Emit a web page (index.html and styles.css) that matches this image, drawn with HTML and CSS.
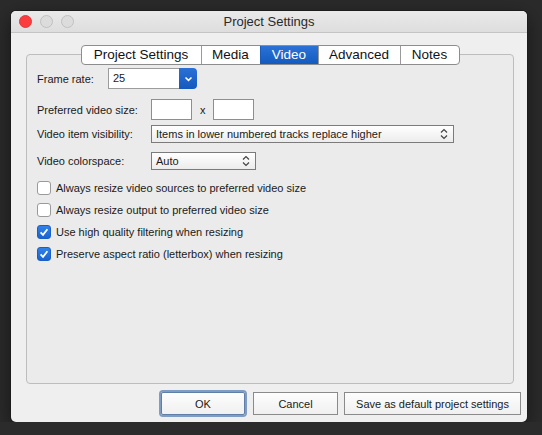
FILE: index.html
```html
<!DOCTYPE html>
<html>
<head>
    <meta charset="utf-8">
    <title>Project Settings</title>
    <link rel="stylesheet" href="styles.css">
</head>
<body>
    <div class="window">
        <div class="titlebar">
            <div class="lights">
                <span class="light close"></span>
                <span class="light"></span>
                <span class="light"></span>
            </div>
            <div class="title">Project Settings</div>
            <div></div>
        </div>

        <div class="content">
            <div class="tabs">
                <span class="tab t-project">Project Settings</span>
                <span class="tab t-media">Media</span>
                <span class="tab t-video active">Video</span>
                <span class="tab t-advanced">Advanced</span>
                <span class="tab t-notes">Notes</span>
            </div>

            <div class="panel">
                <div class="row frame-row">
                    <span class="label short">Frame rate:</span>
                    <div class="combo">
                        <span class="combo-text">25</span>
                        <span class="combo-arrow">
                            <svg width="9" height="6" viewBox="0 0 9 6"><path d="M1.5 1.5l3 2.8 3-2.8" fill="none" stroke="#fff" stroke-width="1.6"/></svg>
                        </span>
                    </div>
                </div>

                <div class="row size-row">
                    <span class="label">Preferred video size:</span>
                    <span class="field"></span>
                    <span class="times">x</span>
                    <span class="field"></span>
                </div>

                <div class="row visibility-row">
                    <span class="label">Video item visibility:</span>
                    <div class="popup wide">
                        <span>Items in lower numbered tracks replace higher</span>
                        <svg class="stepper" width="8" height="12" viewBox="0 0 8 12"><path d="M1 4.5l3-3 3 3M1 7.5l3 3 3-3" fill="none" stroke="#444" stroke-width="1.2"/></svg>
                    </div>
                </div>

                <div class="row colorspace-row">
                    <span class="label">Video colorspace:</span>
                    <div class="popup narrow">
                        <span>Auto</span>
                        <svg class="stepper" width="8" height="12" viewBox="0 0 8 12"><path d="M1 4.5l3-3 3 3M1 7.5l3 3 3-3" fill="none" stroke="#444" stroke-width="1.2"/></svg>
                    </div>
                </div>

                <div class="checks">
                    <label class="check"><span class="box"></span>Always resize video sources to preferred video size</label>
                    <label class="check"><span class="box"></span>Always resize output to preferred video size</label>
                    <label class="check"><span class="box on"><svg width="14" height="14" viewBox="0 0 14 14"><path d="M3.6 7.4l2.4 2.5 4.4-5.6" fill="none" stroke="#fff" stroke-width="1.8"/></svg></span>Use high quality filtering when resizing</label>
                    <label class="check"><span class="box on"><svg width="14" height="14" viewBox="0 0 14 14"><path d="M3.6 7.4l2.4 2.5 4.4-5.6" fill="none" stroke="#fff" stroke-width="1.8"/></svg></span>Preserve aspect ratio (letterbox) when resizing</label>
                </div>
            </div>

            <div class="buttons">
                <button class="btn ok">OK</button>
                <button class="btn cancel">Cancel</button>
                <button class="btn save">Save as default project settings</button>
            </div>
        </div>
    </div>
</body>
</html>
```

FILE: styles.css
```css
body {
    margin: 0;
    background: #2b2b2b;
    font-family: "Liberation Sans", Arial, sans-serif;
    font-size: 11px;
    color: #1a1a1a;
}

.window {
    margin: 11px 0 0 11px;
    width: 516px;
    height: 411px;
    background: #efefef;
    border-radius: 5px;
    display: flex;
    flex-direction: column;
    overflow: hidden;
    box-shadow: 0 0 0 1px #1c1c1c, 0 6px 20px rgba(0, 0, 0, 0.5);
}

/* title bar */
.titlebar {
    height: 21px;
    border-bottom: 1px solid #c4c4c4;
    background: linear-gradient(#e9e9e9, #dedede);
    display: grid;
    grid-template-columns: 1fr auto 1fr;
    align-items: center;
}
.lights {
    display: flex;
    gap: 8px;
    padding-left: 8px;
}
.light {
    width: 11px;
    height: 11px;
    border-radius: 50%;
    border: 1px solid #c0c0c0;
    background: #dcdcdc;
}
.light.close {
    background: #fc3d3f;
    border-color: #e2383a;
}
.title {
    font-size: 13px;
    color: #2a2a2a;
}

.content {
    flex: 1;
    display: flex;
    flex-direction: column;
    padding: 12px 13px 7px 15px;
}

/* tabs sit over the top edge of the panel */
.tabs {
    position: relative;
    z-index: 1;
    align-self: center;
    display: flex;
    margin-bottom: -11px;
    height: 20px;
    border: 1px solid #8d8d8d;
    border-radius: 4px;
    background: #fff;
    overflow: hidden;
    box-sizing: border-box;
}
.tab {
    font-size: 13.5px;
    line-height: 18px;
    text-align: center;
    border-left: 1px solid #9a9a9a;
    color: #111;
}
.tab:first-child {
    border-left: none;
}
.t-project { width: 119px; }
.t-media { width: 58px; }
.t-video { width: 57px; }
.t-advanced { width: 81px; }
.t-notes { width: 58px; }
.tab.active {
    background: linear-gradient(#2b72d6, #145bc0);
    color: #fff;
    border-left-color: #1b5cb8;
}

.panel {
    flex: 1;
    border: 1px solid #bdbdbd;
    border-radius: 4px;
    background: #ebebeb;
    padding: 13px 10px 0 10px;
}

.row {
    display: flex;
    align-items: center;
}
.label {
    width: 114px;
    flex: none;
}
.label.short {
    width: 71px;
}

/* frame rate combo box */
.combo {
    display: flex;
    height: 21px;
    width: 89px;
}
.combo-text {
    flex: 1;
    background: #fff;
    border: 1px solid #9c9c9c;
    border-right: none;
    padding-left: 4px;
    line-height: 19px;
}
.combo-arrow {
    width: 18px;
    background: linear-gradient(#2a70d5, #1559bf);
    border-radius: 0 4px 4px 0;
    display: flex;
    align-items: center;
    justify-content: center;
}

.size-row {
    margin-top: 10px;
}
.field {
    width: 39px;
    height: 19px;
    background: #fff;
    border: 1px solid #8e8e8e;
}
.times {
    margin: 0 7px 0 8px;
}

.visibility-row {
    margin-top: 5px;
}
.colorspace-row {
    margin-top: 9px;
}
.popup {
    height: 16px;
    border: 1px solid #7b7b7b;
    background: linear-gradient(#ffffff, #ececec);
    display: flex;
    align-items: center;
    justify-content: space-between;
    padding: 0 5px 0 4px;
    box-sizing: content-box;
}
.popup.wide {
    width: 292px;
}
.popup.narrow {
    width: 94px;
}

.checks {
    margin-top: 11px;
    display: flex;
    flex-direction: column;
    gap: 8px;
}
.check {
    display: flex;
    align-items: center;
    gap: 5px;
}
.box {
    width: 12px;
    height: 12px;
    border: 1px solid #9a9a9a;
    border-radius: 3px;
    background: #fff;
    display: flex;
    align-items: center;
    justify-content: center;
}
.box.on {
    background: linear-gradient(#3082e8, #1964d2);
    border-color: #1a5fc4;
}
.box svg {
    flex: none;
}

/* dialog buttons, the row runs a little past the panel's right edge */
.buttons {
    display: flex;
    justify-content: flex-end;
    gap: 6px;
    margin-top: 8px;
    margin-right: -7px;
}
.btn {
    height: 23px;
    font-family: "Liberation Sans", Arial, sans-serif;
    font-size: 11px;
    color: #1a1a1a;
    border: 1px solid #8a8a8a;
    background: linear-gradient(#fdfdfd, #f0f0f0);
    padding: 0;
}
.btn.ok {
    width: 84px;
    margin-right: 2px;
    border-color: #5f7fa8;
    box-shadow: 0 0 0 2px #7f9cc2;
    border-radius: 2px;
}
.btn.cancel {
    width: 85px;
}
.btn.save {
    width: 177px;
}
```
